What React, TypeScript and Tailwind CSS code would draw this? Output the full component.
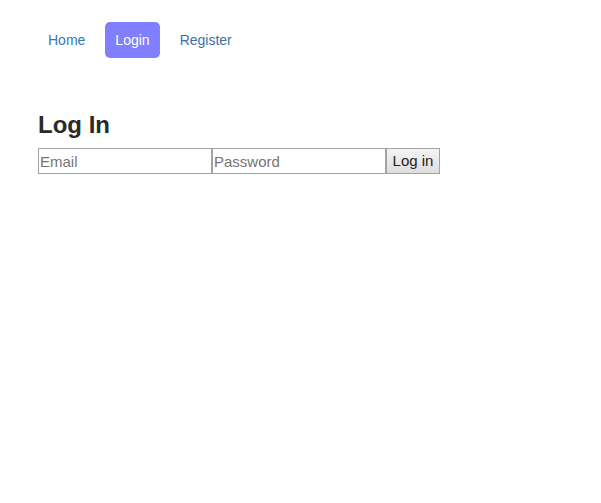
export default function App() {
  return (
    <div className="min-h-screen bg-white text-[#333] font-['Liberation_Sans',Arial,sans-serif]">
      <nav className="flex items-center pl-[38px] pt-[22px] text-[14px] leading-[16px]">
        <a href="#" className="px-[10px] py-[10px] text-[#337ab7]">Home</a>
        <a href="#" className="ml-[10px] px-[10px] py-[10px] rounded-[5px] bg-[#7f7fff] text-white">Login</a>
        <a href="#" className="ml-[10px] px-[10px] py-[10px] text-[#3d6fa8]">Register</a>
      </nav>
      <main className="px-[38px] mt-[53px]">
        <h1 className="text-[24px] leading-[28px] font-bold text-[#2a2a2a] mb-[9px]">Log In</h1>
        <form className="flex" onSubmit={(e) => e.preventDefault()}>
          <input
            type="email"
            placeholder="Email"
            className="w-[174px] h-[26px] px-[1px] border border-[#a3a3a3] text-[15px] placeholder:text-[#757575] outline-none"
          />
          <input
            type="password"
            placeholder="Password"
            className="w-[174px] h-[26px] px-[1px] border border-[#a3a3a3] text-[15px] placeholder:text-[#757575] outline-none"
          />
          <button
            type="submit"
            className="w-[54px] h-[26px] border border-[#a3a3a3] bg-gradient-to-b from-[#f4f4f4] to-[#dedede] text-[15px] text-[#222]"
          >
            Log in
          </button>
        </form>
      </main>
    </div>
  );
}
